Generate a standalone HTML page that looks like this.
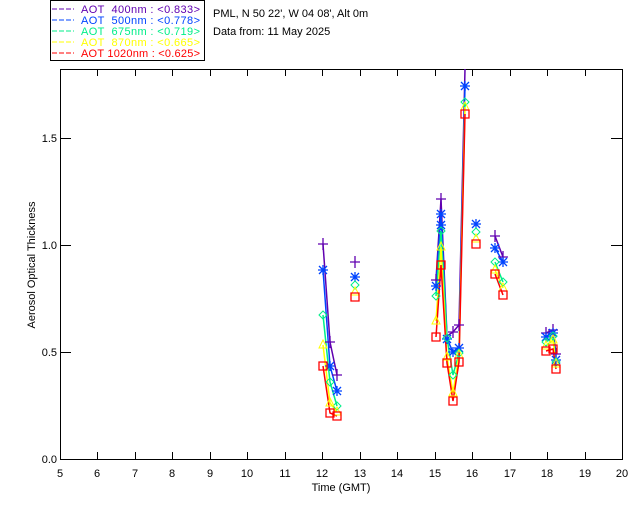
<!DOCTYPE html>
<html><head><meta charset="utf-8"><style>
body{margin:0;background:#fff;width:640px;height:512px;overflow:hidden}
svg{display:block}
text{font-family:"Liberation Sans",sans-serif;font-size:11px}
.lg{white-space:pre}
</style></head><body>
<svg width="640" height="512" viewBox="0 0 640 512" xmlns="http://www.w3.org/2000/svg">
<defs>
<symbol id="pl" overflow="visible"><path d="M-5 0H5M0 -6V6" stroke-width="1.3" fill="none"/></symbol>
<symbol id="st" overflow="visible"><path d="M-5 0H5M0 -5V5M-4 -4L4 4M-4 4L4 -4" stroke-width="1.3" fill="none"/></symbol>
<symbol id="di" overflow="visible"><path d="M0 -4L4 0L0 4L-4 0Z" stroke-width="1" fill="none"/></symbol>
<symbol id="tr" overflow="visible"><path d="M0 -5L4 3H-4Z" stroke-width="1" fill="none"/></symbol>
<symbol id="sq" overflow="visible"><path d="M-4 -4H4V4H-4Z" stroke-width="1.3" fill="none"/></symbol>
</defs>
<rect x="50.5" y="0.5" width="154" height="60" fill="none" stroke="#000"/>
<g stroke-width="1" stroke-dasharray="5,2">
<line x1="52" y1="9" x2="74" y2="9" stroke="#6000b0"/>
<line x1="52" y1="20" x2="74" y2="20" stroke="#0044ff"/>
<line x1="52" y1="31" x2="74" y2="31" stroke="#00ee88"/>
<line x1="52" y1="42" x2="74" y2="42" stroke="#ffff00"/>
<line x1="52" y1="53" x2="74" y2="53" stroke="#ff0000"/>
</g>
<text class="lg" x="81" y="13" fill="#6000b0" textLength="119" lengthAdjust="spacing">AOT  400nm : &lt;0.833&gt;</text>
<text class="lg" x="81" y="24" fill="#0044ff" textLength="119" lengthAdjust="spacing">AOT  500nm : &lt;0.778&gt;</text>
<text class="lg" x="81" y="35" fill="#00ee88" textLength="119" lengthAdjust="spacing">AOT  675nm : &lt;0.719&gt;</text>
<text class="lg" x="81" y="46" fill="#ffff00" textLength="119" lengthAdjust="spacing">AOT  870nm : &lt;0.665&gt;</text>
<text class="lg" x="81" y="57" fill="#ff0000" textLength="119" lengthAdjust="spacing">AOT 1020nm : &lt;0.625&gt;</text>
<text x="213" y="17">PML, N 50 22', W 04 08', Alt 0m</text>
<text x="213" y="35">Data from: 11 May 2025</text>
<rect x="60.5" y="69.5" width="562" height="390" fill="none" stroke="#000"/>
<g stroke="#000">
<path d="M97.5 69v7M135.5 69v7M172.5 69v7M210.5 69v7M247.5 69v7M285.5 69v7M322.5 69v7M360.5 69v7M397.5 69v7M435.5 69v7M472.5 69v7M510.5 69v7M547.5 69v7M585.5 69v7"/>
<path d="M97.5 459v-7M135.5 459v-7M172.5 459v-7M210.5 459v-7M247.5 459v-7M285.5 459v-7M322.5 459v-7M360.5 459v-7M397.5 459v-7M435.5 459v-7M472.5 459v-7M510.5 459v-7M547.5 459v-7M585.5 459v-7"/>
<path d="M60 352.5h11M60 245.5h11M60 138.5h11M622 352.5h-11M622 245.5h-11M622 138.5h-11"/>
</g>
<g text-anchor="end">
<text x="57" y="463">0.0</text><text x="57" y="356">0.5</text><text x="57" y="249">1.0</text><text x="57" y="142">1.5</text>
</g>
<g text-anchor="middle">
<text x="60" y="477">5</text><text x="97" y="477">6</text><text x="135" y="477">7</text><text x="172" y="477">8</text><text x="210" y="477">9</text><text x="247" y="477">10</text><text x="285" y="477">11</text><text x="322" y="477">12</text><text x="360" y="477">13</text><text x="397" y="477">14</text><text x="435" y="477">15</text><text x="472" y="477">16</text><text x="510" y="477">17</text><text x="547" y="477">18</text><text x="585" y="477">19</text><text x="622" y="477">20</text>
<text x="341" y="491">Time (GMT)</text>
<text transform="translate(35 265) rotate(-90)">Aerosol Optical Thickness</text>
</g>
<g fill="none" stroke-width="1.5">
<g stroke="#6000b0">
<polyline points="323,244 330,342 337,375"/>
<polyline points="436,280 441,199 447,336 453,332 459,325 465,69"/>
<polyline points="495,236 503,257"/>
<polyline points="546,333 553,330 556,354"/>
</g>
<g stroke="#0044ff">
<polyline points="323,270 330,366 337,391"/>
<polyline points="436,286 441,214 447,339 453,352 459,348 465,86"/>
<polyline points="495,248 503,262"/>
<polyline points="546,337 553,333 556,360"/>
</g>
<g stroke="#00ee88">
<polyline points="323,315 330,382 337,406"/>
<polyline points="436,296 441,231 447,338 453,375 459,353 465,102"/>
<polyline points="495,262 503,282"/>
<polyline points="546,342 553,336 556,362"/>
</g>
<g stroke="#ffff00">
<polyline points="323,345 330,403 337,412"/>
<polyline points="436,321 441,247 447,357 453,393 459,355 465,107"/>
<polyline points="495,270 503,288"/>
<polyline points="546,346 553,340 556,364"/>
</g>
<g stroke="#ff0000">
<polyline points="323,366 330,413 337,416"/>
<polyline points="436,337 441,265 447,363 453,401 459,362 465,114"/>
<polyline points="495,274 503,295"/>
<polyline points="546,351 553,349 556,369"/>
</g>
</g>
<g stroke="#6000b0">
<use href="#pl" x="323" y="244"/><use href="#pl" x="330" y="342"/><use href="#pl" x="337" y="375"/><use href="#pl" x="355" y="262"/>
<use href="#pl" x="436" y="280"/><use href="#pl" x="441" y="199"/><use href="#pl" x="453" y="332"/><use href="#pl" x="459" y="325"/>
<use href="#pl" x="495" y="236"/><use href="#pl" x="503" y="257"/>
<use href="#pl" x="546" y="333"/><use href="#pl" x="553" y="330"/><use href="#pl" x="556" y="354"/>
</g>
<g stroke="#0044ff">
<use href="#st" x="323" y="270"/><use href="#st" x="330" y="366"/><use href="#st" x="337" y="391"/><use href="#st" x="355" y="277"/>
<use href="#st" x="436" y="286"/><use href="#st" x="441" y="214"/><use href="#st" x="441" y="225"/><use href="#st" x="447" y="339"/><use href="#st" x="453" y="352"/><use href="#st" x="459" y="348"/><use href="#st" x="465" y="86"/><use href="#st" x="476" y="224"/>
<use href="#st" x="495" y="248"/><use href="#st" x="503" y="262"/>
<use href="#st" x="546" y="337"/><use href="#st" x="553" y="333"/><use href="#st" x="556" y="360"/>
</g>
<g stroke="#00ee88">
<use href="#di" x="323" y="315"/><use href="#di" x="330" y="382"/><use href="#di" x="337" y="406"/><use href="#di" x="355" y="285"/>
<use href="#di" x="436" y="296"/><use href="#di" x="441" y="231"/><use href="#di" x="447" y="338"/><use href="#di" x="453" y="375"/><use href="#di" x="459" y="353"/><use href="#di" x="465" y="102"/><use href="#di" x="476" y="232"/>
<use href="#di" x="495" y="262"/><use href="#di" x="503" y="282"/>
<use href="#di" x="546" y="342"/><use href="#di" x="553" y="336"/><use href="#di" x="556" y="362"/>
</g>
<g stroke="#ffff00">
<use href="#tr" x="323" y="345"/><use href="#tr" x="330" y="403"/><use href="#tr" x="337" y="412"/><use href="#tr" x="355" y="292"/>
<use href="#tr" x="436" y="321"/><use href="#tr" x="441" y="247"/><use href="#tr" x="447" y="357"/><use href="#tr" x="453" y="393"/><use href="#tr" x="459" y="355"/><use href="#tr" x="465" y="107"/><use href="#tr" x="476" y="239"/>
<use href="#tr" x="495" y="270"/><use href="#tr" x="503" y="288"/>
<use href="#tr" x="546" y="346"/><use href="#tr" x="553" y="340"/><use href="#tr" x="556" y="364"/>
</g>
<g stroke="#ff0000">
<use href="#sq" x="323" y="366"/><use href="#sq" x="330" y="413"/><use href="#sq" x="337" y="416"/><use href="#sq" x="355" y="297"/>
<use href="#sq" x="436" y="337"/><use href="#sq" x="441" y="265"/><use href="#sq" x="447" y="363"/><use href="#sq" x="453" y="401"/><use href="#sq" x="459" y="362"/><use href="#sq" x="465" y="114"/><use href="#sq" x="476" y="244"/>
<use href="#sq" x="495" y="274"/><use href="#sq" x="503" y="295"/>
<use href="#sq" x="546" y="351"/><use href="#sq" x="553" y="349"/><use href="#sq" x="556" y="369"/>
</g>
</svg>
</body></html>
